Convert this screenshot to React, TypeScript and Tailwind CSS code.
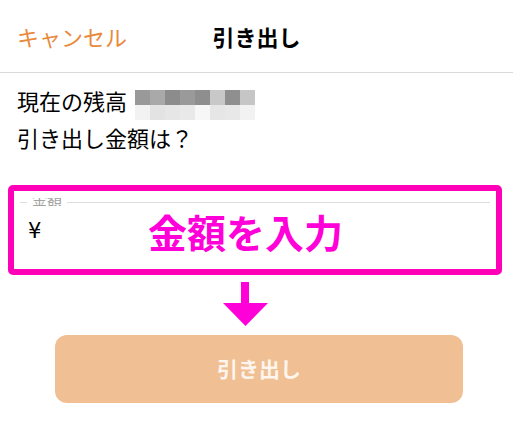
const topRow = ['#999999', '#a9a9a9', '#8c8c8c', '#9a9a9a', '#8e8e8e', '#c8c8c8', '#8f8f8f', '#c6c6c6'];
const bottomRow = ['#f2f2f2', '#e3e3e3', '#e6e6e6', '#e9e9e9', '#f7f7f7', '#e6e6e6', '#e8e8e8', '#f2f2f2'];

// pixelated balance
function Mosaic() {
  return (
    <div className="mt-[2px] flex flex-col">
      {[topRow, bottomRow].map((row, r) => (
        <div key={r} className="flex">
          {row.map((c, i) => (
            <div key={i} className="h-[15px] w-[15px]" style={{ backgroundColor: c }} />
          ))}
        </div>
      ))}
    </div>
  );
}

export default function App() {
  return (
    <div className="h-[438px] w-[513px] overflow-hidden bg-white font-['Noto_Sans_CJK_JP',sans-serif] text-black">
      {/* Header */}
      <div className="grid h-[73px] grid-cols-[1fr_auto_1fr] items-center border-b border-[#d9d9d9] pb-[1px]">
        <span className="pl-[17px] text-[22px] leading-none text-[#e8893c]">キャンセル</span>
        <span className="text-[22px] font-bold leading-none">引き出し</span>
        <span />
      </div>

      {/* Balance */}
      <div className="px-[17px] pt-[15px]">
        <div className="flex items-start gap-[8px]">
          <span className="text-[22px] leading-[24px]">現在の残高</span>
          <Mosaic />
        </div>
        <p className="mt-[5px] text-[22px] leading-[24px]">引き出し金額は？</p>
      </div>

      {/* Amount input (highlighted) */}
      <div className="mx-[8px] mt-[36px] h-[90px] w-[494px] rounded-[5px] border-[6px] border-[#ff00b9]">
        <div className="px-[6px] pt-[7px]">
          <div className="flex items-center">
            <div className="h-px w-[7px] bg-[#dedede]" />
            <div className="mx-[5px] h-[8px] overflow-hidden">
              <span className="-mt-[7px] block text-[15px] leading-[15px] text-[#a3a3a3]">金額</span>
            </div>
            <div className="h-px flex-1 bg-[#dedede]" />
          </div>
          <div className="mt-[6px] flex items-center">
            <span className="w-[128px] pl-[8px] font-['DejaVu_Sans',sans-serif] text-[21px] leading-none">¥</span>
            <span className="text-[39px] font-bold leading-none text-[#ff00d8]">金額を入力</span>
          </div>
        </div>
      </div>

      {/* Arrow */}
      <div className="flex justify-center pt-[7px]">
        <svg width="45" height="44" viewBox="0 0 45 44" className="ml-[-23px]">
          <rect x="18" y="0" width="8" height="22" fill="#ff00d8" />
          <polygon points="0,21 45,21 22.5,44" fill="#ff00d8" />
        </svg>
      </div>

      {/* Submit */}
      <div className="px-[55px] pt-[9px]">
        <button className="flex h-[68px] w-[408px] items-center justify-center rounded-[12px] bg-[#f0c094] text-[21px] font-bold text-[#fdf5ee]">
          引き出し
        </button>
      </div>
    </div>
  );
}
